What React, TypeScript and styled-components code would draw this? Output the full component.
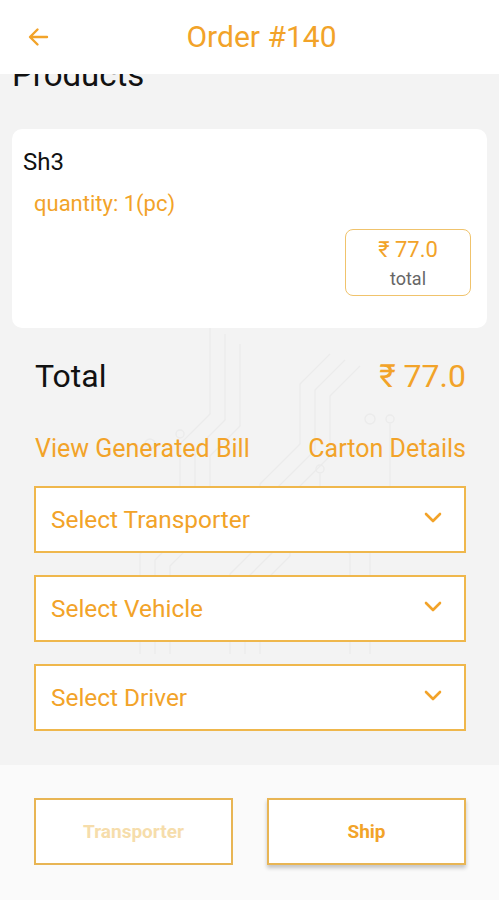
import React from "react";
import styled, { createGlobalStyle } from "styled-components";

const orange = "#f2a329";

const GlobalStyle = createGlobalStyle`
  * { box-sizing: border-box; }
  body {
    margin: 0;
    font-family: Roboto, "Noto Sans", Arial, sans-serif;
    background: #f3f3f3;
  }
`;

const Page = styled.div`
  width: 499px;
  height: 900px;
  display: flex;
  flex-direction: column;
  overflow: hidden;
`;

const Header = styled.div`
  height: 74px;
  flex-shrink: 0;
  display: flex;
  align-items: center;
  padding: 0 26px;
  background: #fff;
  position: relative;
  z-index: 2;
`;

const BackButton = styled.button`
  width: 24px;
  height: 24px;
  padding: 0;
  border: none;
  background: none;
  display: flex;
  align-items: center;
  justify-content: center;
`;

const Title = styled.div`
  flex: 1;
  text-align: center;
  font-size: 30px;
  color: ${orange};
  padding-bottom: 2px;
`;

const Content = styled.div`
  flex: 1;
  position: relative;
  padding: 0 12px;
  background: #f3f3f3;
`;

const Watermark = styled.svg`
  position: absolute;
  left: 120px;
  top: 250px;
  z-index: 0;
  pointer-events: none;
`;

const Layer = styled.div`
  position: relative;
  z-index: 1;
`;

const Heading = styled.h2`
  margin: -18px 0 35px;
  font-size: 33px;
  line-height: 38px;
  font-weight: 400;
  color: #111;
`;

const Card = styled.div`
  background: #fff;
  border-radius: 10px;
  height: 199px;
  padding: 19px 16px 0 11px;
  display: flex;
  flex-direction: column;
`;

const ProductName = styled.div`
  font-size: 24px;
  line-height: 28px;
  color: #111;
`;

const Quantity = styled.div`
  margin: 15px 0 0 11px;
  font-size: 22px;
  line-height: 26px;
  color: ${orange};
`;

const PriceBox = styled.div`
  align-self: flex-end;
  margin-top: 12px;
  width: 126px;
  height: 67px;
  border: 1.5px solid #f0c36c;
  border-radius: 8px;
  display: flex;
  flex-direction: column;
  align-items: center;
  padding-top: 7px;
`;

const PriceValue = styled.div`
  font-size: 22px;
  line-height: 26px;
  color: ${orange};
`;

const PriceLabel = styled.div`
  margin-top: 5px;
  font-size: 18px;
  line-height: 22px;
  color: #666;
`;

const Section = styled.div`
  margin: 0 21px 0 22px;
`;

const TotalRow = styled.div`
  display: flex;
  justify-content: space-between;
  margin-top: 29px;
  font-size: 32px;
  line-height: 38px;
`;

const TotalLabel = styled.span`
  color: #111;
  padding-left: 1px;
`;

const TotalValue = styled.span`
  color: ${orange};
`;

const LinkRow = styled.div`
  display: flex;
  justify-content: space-between;
  margin-top: 39px;
  font-size: 25px;
  line-height: 29px;
  color: ${orange};
`;

const Link = styled.span`
  padding-left: 1px;
`;

const Selects = styled.div`
  display: flex;
  flex-direction: column;
  gap: 22px;
  margin-top: 23px;
`;

const SelectBox = styled.div`
  height: 67px;
  background: #fff;
  border: 2px solid #efb74c;
  display: flex;
  align-items: center;
  justify-content: space-between;
  padding: 0 22px 0 15px;
  font-size: 24.4px;
  color: ${orange};
`;

const Footer = styled.div`
  height: 135px;
  flex-shrink: 0;
  background: #fafafa;
  display: flex;
  gap: 34px;
  padding: 33px 33px 0 34px;
`;

const ActionButton = styled.button<{ $disabled?: boolean }>`
  width: 199px;
  height: 67px;
  background: #fff;
  border: 2px solid #e8b554;
  font-family: inherit;
  font-size: 19px;
  font-weight: 700;
  color: ${(p) => (p.$disabled ? "#f6ddab" : orange)};
  box-shadow: ${(p) => (p.$disabled ? "none" : "0 3px 4px rgba(0,0,0,0.22)")};
`;

const Chevron = () => (
  <svg width="18" height="12" viewBox="0 0 18 12" style={{ marginBottom: 3 }}>
    <path d="M2 2l7 7 7-7" fill="none" stroke={orange} strokeWidth="2.6" strokeLinecap="round" strokeLinejoin="round" />
  </svg>
);

const BackArrow = () => (
  <svg width="24" height="24" viewBox="0 0 24 24">
    <path d="M21 12H4.5M11.5 4.5L4 12l7.5 7.5" fill="none" stroke={orange} strokeWidth="2.4" strokeLinecap="round" strokeLinejoin="round" />
  </svg>
);

const Circuit = () => (
  <Watermark width="300" height="330" viewBox="0 0 300 330">
    <g fill="none" stroke="#ebebeb" strokeWidth="1.4">
      <path d="M20 330V230l40-40V120l30-30V0" />
      <path d="M35 330V236l40-40V126l30-30V10" />
      <path d="M50 330V242l40-40V132l30-30V20" />
      <path d="M110 330V250l30-30V160l40-40V60l30-30" />
      <path d="M125 330V256l30-30V166l40-40V66l30-30" />
      <path d="M140 330V262l30-30V172l40-40V72l30-30" />
      <path d="M230 330V230l-30-30V150" />
      <path d="M250 330V220l20-20V100" />
      <circle cx="30" cy="120" r="5" />
      <circle cx="60" cy="110" r="4" />
      <circle cx="250" cy="95" r="5" />
      <circle cx="200" cy="145" r="4" />
      <circle cx="270" cy="95" r="4" />
      <circle cx="190" cy="310" r="4" />
    </g>
  </Watermark>
);

const selects = ["Select Transporter", "Select Vehicle", "Select Driver"];

export default function App() {
  return (
    <Page>
      <GlobalStyle />
      <Header>
        <BackButton aria-label="back">
          <BackArrow />
        </BackButton>
        <Title>Order #140</Title>
      </Header>
      <Content>
        <Circuit />
        <Layer>
          <Heading>Products</Heading>
          <Card>
            <ProductName>Sh3</ProductName>
            <Quantity>quantity: 1(pc)</Quantity>
            <PriceBox>
              <PriceValue>₹ 77.0</PriceValue>
              <PriceLabel>total</PriceLabel>
            </PriceBox>
          </Card>
          <Section>
            <TotalRow>
              <TotalLabel>Total</TotalLabel>
              <TotalValue>₹ 77.0</TotalValue>
            </TotalRow>
            <LinkRow>
              <Link>View Generated Bill</Link>
              <span>Carton Details</span>
            </LinkRow>
            <Selects>
              {selects.map((s) => (
                <SelectBox key={s}>
                  <span>{s}</span>
                  <Chevron />
                </SelectBox>
              ))}
            </Selects>
          </Section>
        </Layer>
      </Content>
      <Footer>
        <ActionButton $disabled>Transporter</ActionButton>
        <ActionButton>Ship</ActionButton>
      </Footer>
    </Page>
  );
}
